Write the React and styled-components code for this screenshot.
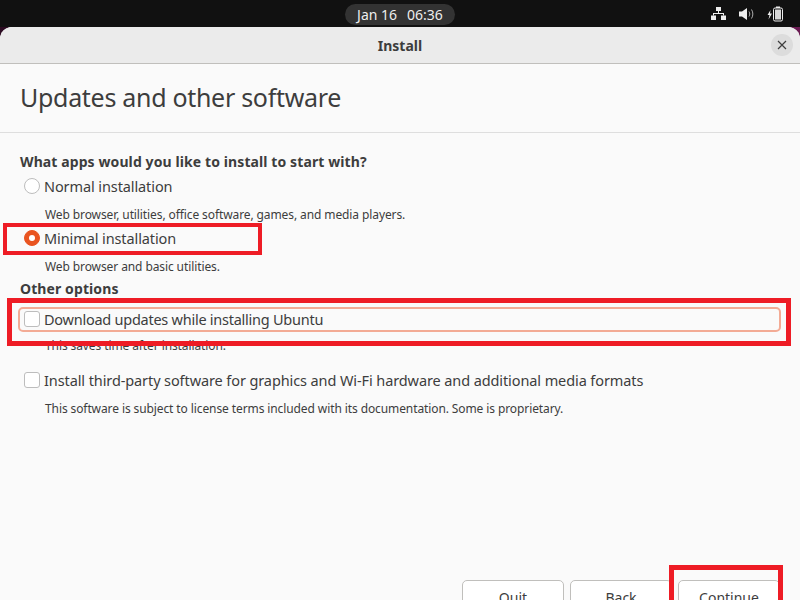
import React from "react";
import styled, { createGlobalStyle } from "styled-components";

const Global = createGlobalStyle`
  html, body { margin: 0; padding: 0; width: 800px; height: 600px; overflow: hidden; background: linear-gradient(90deg, #2c0b22, #6a1b52); }
  #root { width: 800px; height: 600px; overflow: hidden; }
  * { box-sizing: border-box; }
`;
const FONT = `"Noto Sans", "Open Sans", sans-serif`;

const Screen = styled.div`
  position: relative; width: 800px; height: 600px; overflow: hidden;
  display: flex; flex-direction: column; font-family: ${FONT}; color: #3d3d3d;
`;
const TopBar = styled.div`
  height: 27px; flex: none; background: #111; display: grid; grid-template-columns: 1fr auto 1fr; align-items: center;
`;
const Clock = styled.div`
  grid-column: 2; height: 21px; width: 110px; border-radius: 11px; background: #333; color: #eee;
  font-size: 14px; display: flex; align-items: center; justify-content: center; gap: 10px; margin-top: 1px;
`;
const Tray = styled.div`
  grid-column: 3; justify-self: end; display: flex; align-items: center; gap: 13px; padding-right: 17px; color: #eee;
`;
const Win = styled.div`
  flex: none; height: 640px; background: #fafafa; border-radius: 12px 12px 0 0; overflow: hidden; display: flex; flex-direction: column;
`;
const Header = styled.div`
  height: 37px; flex: none; background: #ebebeb; border-bottom: 1px solid #c0bfbc; position: relative;
  display: flex; align-items: center; justify-content: center; padding-top: 1px;
  font-weight: 700; font-size: 14px; color: #3d3d3d;
`;
const Close = styled.div`
  position: absolute; right: 7px; top: 7px; width: 22px; height: 22px; border-radius: 50%; background: #dcdcdc;
  display: flex; align-items: center; justify-content: center;
`;
const Body = styled.div`
  padding: 0 20px; display: flex; flex-direction: column;
`;
const Title = styled.h1`
  margin: 0; font-size: 25px; font-weight: 400; line-height: 34px; padding-top: 16px; height: 68px; color: #3d3d3d; letter-spacing: -0.3px;
`;
const Divider = styled.div`height: 1px; background: #dedede; margin: 0 -20px;`;
const Section = styled.div`
  font-weight: 700; font-size: 14px; line-height: 20px; color: #3d3d3d; letter-spacing: 0.1px;
  margin-top: ${p => p.$top}px;
`;
const Option = styled.div`
  display: flex; align-items: center; gap: 4px; height: ${p => p.$h || 24}px; margin-top: ${p => p.$top || 0}px; padding-left: 4px;
  font-size: 14.5px; color: #3d3d3d; letter-spacing: -0.1px;
`;
const FocusOption = styled(Option)`
  margin-left: -2px; width: 763px; letter-spacing: -0.25px; padding-bottom: 1px;
  border: 2px solid #f3ab95; border-radius: 5px;
`;
const Radio = styled.span`
  width: 16px; height: 16px; border-radius: 50%; flex: none; display: flex; align-items: center; justify-content: center;
  border: 1px solid ${p => (p.$on ? "#e95420" : "#bdbdbd")}; background: ${p => (p.$on ? "#e95420" : "#fff")};
  &::after { content: ""; width: 6px; height: 6px; border-radius: 50%; background: ${p => (p.$on ? "#fff" : "transparent")}; }
`;
const Check = styled.span`
  width: 16px; height: 16px; border-radius: 3px; flex: none; border: 1px solid #bdbdbd; background: #fff;
`;
const Note = styled.div`
  font-size: 12px; line-height: 16px; color: #3d3d3d; padding-left: 25px; letter-spacing: -0.1px; margin-top: ${p => p.$top}px;
`;
const Footer = styled.div`
  display: flex; justify-content: flex-end; gap: 4px; margin-top: ${p => p.$top}px;
`;
const Btn = styled.div`
  width: 102px; height: 34px; border: 1px solid #c0bfbc; border-radius: 5px; background: #fff; margin-left: 2px;
  display: flex; align-items: center; justify-content: center; font-size: 14px; color: #3d3d3d;
`;
const Mark = styled.div`
  position: absolute; border: ${p => p.$t || 5}px solid #ee1c25;
  left: ${p => p.$x}px; top: ${p => p.$y}px; width: ${p => p.$w}px; height: ${p => p.$h}px;
`;

export default function App() {
  return (
    <Screen>
      <Global />
      <TopBar>
        <Clock><span>Jan 16</span><span>06:36</span></Clock>
        <Tray>
          <svg width="15" height="13" viewBox="0 0 15 13" fill="currentColor">
            <rect x="5" y="0" width="5" height="4" /><rect x="0" y="8.500" width="5" height="4.500" /><rect x="10" y="8.500" width="5" height="4.500" />
            <path d="M7 4h1v2h5v2.500h-1V7H3v1.500H2V6h5z" />
          </svg>
          <svg width="15" height="14" viewBox="0 0 15 14" fill="none">
            <path d="M0 4.500h3L8 1v12L3 9.500H0z" fill="currentColor" />
            <path d="M10 4.500c1 1.500 1 3.500 0 5M12.500 2.500c1.800 3 1.800 6 0 9" stroke="currentColor" strokeWidth="1" opacity=".7" />
          </svg>
          <svg width="16" height="16" viewBox="0 0 16 16" fill="none">
            <path d="M3.500 4 0.500 9H2.500L1.500 13.500 5 7.500H3z" fill="currentColor" />
            <rect x="6.500" y="2" width="9" height="13" rx="1.500" stroke="currentColor" strokeWidth="1" />
            <rect x="9" y="0.500" width="4" height="1.500" fill="currentColor" />
            <rect x="8" y="3.500" width="6" height="10" fill="currentColor" opacity=".9" />
          </svg>
        </Tray>
      </TopBar>
      <Win>
        <Header>
          Install
          <Close>
            <svg width="10" height="10" viewBox="0 0 10 10"><path d="M1 1l8 8M9 1l-8 8" stroke="#3d3d3d" strokeWidth="1.200" /></svg>
          </Close>
        </Header>
        <Body>
          <Title>Updates and other software</Title>
          <Divider />
          <Section $top={19}>What apps would you like to install to start with?</Section>
          <Option $top={2}><Radio />Normal installation</Option>
          <Note $top={9}>Web browser, utilities, office software, games, and media players.</Note>
          <Option $top={3}><Radio $on />Minimal installation</Option>
          <Note $top={9}>Web browser and basic utilities.</Note>
          <Section $top={4}>Other options</Section>
          <FocusOption $h={25} $top={8}><Check />Download updates while installing Ubuntu</FocusOption>
          <Note $top={6}>This saves time after installation.</Note>
          <Option $top={14}><Check />Install third-party software for graphics and Wi-Fi hardware and additional media formats</Option>
          <Note $top={9}>This software is subject to license terms included with its documentation. Some is proprietary.</Note>
          <Footer $top={163}>
            <Btn>Quit</Btn><Btn>Back</Btn><Btn>Continue</Btn>
          </Footer>
        </Body>
      </Win>
      <Mark $x={3} $y={223} $w={259} $h={32} $t={4} />
      <Mark $x={7} $y={298} $w={784} $h={48} />
      <Mark $x={669} $y={565} $w={114} $h={60} />
    </Screen>
  );
}
